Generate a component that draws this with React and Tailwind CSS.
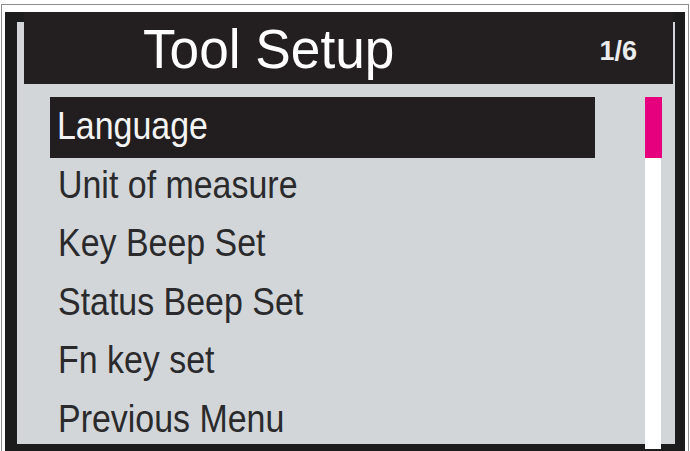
const items = [
  "Language",
  "Unit of measure",
  "Key Beep Set",
  "Status Beep Set",
  "Fn key set",
  "Previous Menu",
];

function MenuRow({ label, active }) {
  return (
    <div
      className={
        active
          ? "h-[60.6px] mb-[-2px] bg-[#221e1f] pl-[7px] pt-[9px] text-[#f4f4f4]"
          : "h-[58.6px] pl-[8px] pt-[9px] text-[#2a2a2c]"
      }
    >
      <span className="inline-block origin-left scale-x-[0.87] text-[39px] leading-none whitespace-nowrap">
        {label}
      </span>
    </div>
  );
}

export default function App() {
  return (
    <div
      className="w-[690px] h-[451px] overflow-hidden bg-white"
      style={{ fontFamily: '"Liberation Sans", Arial, sans-serif' }}
    >
      <div className="ml-[1px] mt-[4px] w-[688px] h-[447px] border-x border-t border-[#8e8e8e] px-[3px] pt-[7px]">
        {/* device frame */}
        <div className="h-[440px] bg-[#1d1c1d] pl-[12px] pr-[10px] pt-[10px] pb-[8px]">
          <div className="h-full bg-[#d3d6d9] flex flex-col">
            {/* header */}
            <div className="-mt-[10px] ml-[7px] mr-[2px] h-[72px] shrink-0 bg-[#231f20] flex items-start text-white">
              <span className="ml-[119px] mt-[9px] inline-block origin-left scale-x-[0.95] text-[56px] leading-none whitespace-nowrap">
                Tool Setup
              </span>
              <span className="ml-auto mr-[36px] mt-[26px] text-[27px] font-bold leading-none text-[#ececec]">
                1/6
              </span>
            </div>

            {/* list + scrollbar */}
            <div className="flex flex-1 pt-[13px]">
              <div className="ml-[33px] w-[545px]">
                {items.map((label, i) => (
                  <MenuRow key={label} label={label} active={i === 0} />
                ))}
              </div>
              <div className="ml-[50px] w-[17px] flex flex-col">
                <div className="h-[61px] bg-[#e6007e]" />
                <div className="flex-1 w-[16px] bg-white" />
              </div>
            </div>
          </div>
        </div>
      </div>
    </div>
  );
}
